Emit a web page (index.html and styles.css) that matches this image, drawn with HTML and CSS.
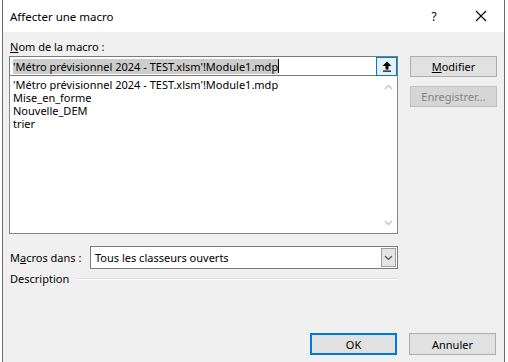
FILE: index.html
```html
<!DOCTYPE html>
<html>
<head>
    <title>Affecter une macro</title>
    <link rel="stylesheet" href="styles.css">
</head>
<body>

    <div class="dialog">
        <div class="titlebar">
            <span class="title">Affecter une macro</span>
            <span class="help">?</span>
            <span class="close">
                <svg width="12" height="12" viewBox="0 0 12 12"><path d="M1 1 L11 11 M11 1 L1 11" stroke="#000" stroke-width="1.1" fill="none"/></svg>
            </span>
        </div>

        <div class="content">
            <div class="left">
                <div class="label"><u>N</u>om de la macro :</div>
                <div class="namebox">
                    <span class="selected">'Métro prévisionnel 2024 - TEST.xlsm'!Module1.mdp</span><span class="caret"></span>
                    <span class="upbtn">
                        <svg width="10" height="11" viewBox="0 0 10 11"><path d="M5 0.5 L9.5 5 L6.5 5 L6.5 8.5 L3.5 8.5 L3.5 5 L0.5 5 Z" fill="#000"/><rect x="1" y="9.5" width="8" height="1.2" fill="#000"/></svg>
                    </span>
                </div>
                <div class="listbox">
                    <ul class="items">
                        <li>'Métro prévisionnel 2024 - TEST.xlsm'!Module1.mdp</li>
                        <li>Mise_en_forme</li>
                        <li>Nouvelle_DEM</li>
                        <li>trier</li>
                    </ul>
                    <div class="scrollbar">
                        <svg width="9" height="6" viewBox="0 0 9 6"><path d="M1 5 L4.5 1.5 L8 5" stroke="#c2c2c2" stroke-width="1.3" fill="none"/></svg>
                        <svg width="9" height="6" viewBox="0 0 9 6"><path d="M1 1 L4.5 4.5 L8 1" stroke="#c2c2c2" stroke-width="1.3" fill="none"/></svg>
                    </div>
                </div>

                <div class="macrosrow">
                    <span class="label">M<u>a</u>cros dans :</span>
                    <div class="combo">
                        <span class="combotext">Tous les classeurs ouverts</span>
                        <span class="dropbtn">
                            <svg width="9" height="6" viewBox="0 0 9 6"><path d="M1 1 L4.5 4.5 L8 1" stroke="#555" stroke-width="1.2" fill="none"/></svg>
                        </span>
                    </div>
                </div>

                <div class="descrow">
                    <span class="label">Description</span>
                    <span class="etched"></span>
                </div>
            </div>

            <div class="right">
                <button class="btn"><u>M</u>odifier</button>
                <button class="btn disabled">Enregistrer...</button>
            </div>
        </div>

        <div class="footer">
            <button class="btn default">OK</button>
            <button class="btn">Annuler</button>
        </div>
    </div>

</body>
</html>
```

FILE: styles.css
```css
body {
    margin: 0;
    background: #ffffff;
    font-family: "Noto Sans", sans-serif;
    font-size: 11px;
    color: #000;
}

.dialog {
    margin-left: 2px;
    width: 501px;
    height: 362px;
    border-left: 1px solid #6a6a6a;
    border-right: 1px solid #6a6a6a;
    background: #f0f0f0;
    display: flex;
    flex-direction: column;
}

.titlebar {
    height: 32px;
    background: #ffffff;
    display: flex;
    align-items: center;
}

.title {
    flex: 1;
    padding-left: 7px;
    font-size: 11.5px;
    margin-top: 1px;
}

.help {
    width: 20px;
    margin-right: 27px;
    font-size: 12px;
    text-align: center;
}

.close {
    width: 20px;
    margin-right: 13px;
    display: flex;
    justify-content: center;
}

.content {
    display: flex;
    gap: 12px;
    padding: 0 0 0 6px;
}

.left {
    width: 389px;
}

.label {
    padding-left: 1px;
    line-height: 16px;
}

.content > .left > .label {
    margin-top: 7px;
    height: 17px;
}

.namebox {
    height: 18px;
    border: 1px solid #7a7a7a;
    background: #fff;
    display: flex;
    align-items: center;
    padding-left: 3px;
}

.selected {
    background: #cccccc;
    line-height: 15px;
    white-space: nowrap;
}

.caret {
    width: 1px;
    height: 14px;
    background: #000;
}

.upbtn {
    margin-left: auto;
    width: 19px;
    height: 17px;
    border: 1px solid #0078d7;
    background: #e5f1fb;
    display: flex;
    align-items: center;
    justify-content: center;
}

.listbox {
    height: 157px;
    border: 1px solid #828790;
    border-top: none;
    background: #fff;
    display: flex;
}

.items {
    flex: 1;
    list-style: none;
    margin: 0;
    padding: 2px 0 0 3px;
}

.items li {
    height: 13px;
    line-height: 13px;
    overflow: hidden;
    white-space: nowrap;
}

.scrollbar {
    width: 17px;
    display: flex;
    flex-direction: column;
    justify-content: space-between;
    align-items: center;
    padding: 8px 0 7px;
}

.macrosrow {
    display: flex;
    align-items: center;
    margin-top: 12px;
    height: 23px;
}

.macrosrow .label {
    width: 80px;
}

.combo {
    flex: 1;
    height: 21px;
    border: 1px solid #7a7a7a;
    background: #fff;
    display: flex;
    align-items: center;
    padding-left: 4px;
}

.combotext {
    flex: 1;
}

.dropbtn {
    width: 15px;
    height: 19px;
    margin-right: 1px;
    background: #e5e5e5;
    border: 1px solid #a0a0a0;
    box-sizing: border-box;
    display: flex;
    align-items: center;
    justify-content: center;
}

.descrow {
    display: flex;
    align-items: center;
    height: 19px;
}

.etched {
    flex: 1;
    margin-left: 6px;
    height: 1px;
    border-top: 1px solid #dcdcdc;
    background: #fff;
}

.right {
    width: 87px;
    display: flex;
    flex-direction: column;
    gap: 9px;
    padding-top: 24px;
}

.btn {
    width: 87px;
    height: 21px;
    background: #e1e1e1;
    border: 1px solid #adadad;
    font-family: "Noto Sans", sans-serif;
    font-size: 11px;
    padding: 0;
    color: #000;
}

.btn.disabled {
    background: #d6d6d6;
    border-color: #bfbfbf;
    color: #838383;
}

.footer {
    margin-top: auto;
    display: flex;
    gap: 12px;
    padding: 0 0 7px 307px;
}

.footer .btn {
    height: 22px;
}

.btn.default {
    border: 2px solid #0078d7;
}
```
